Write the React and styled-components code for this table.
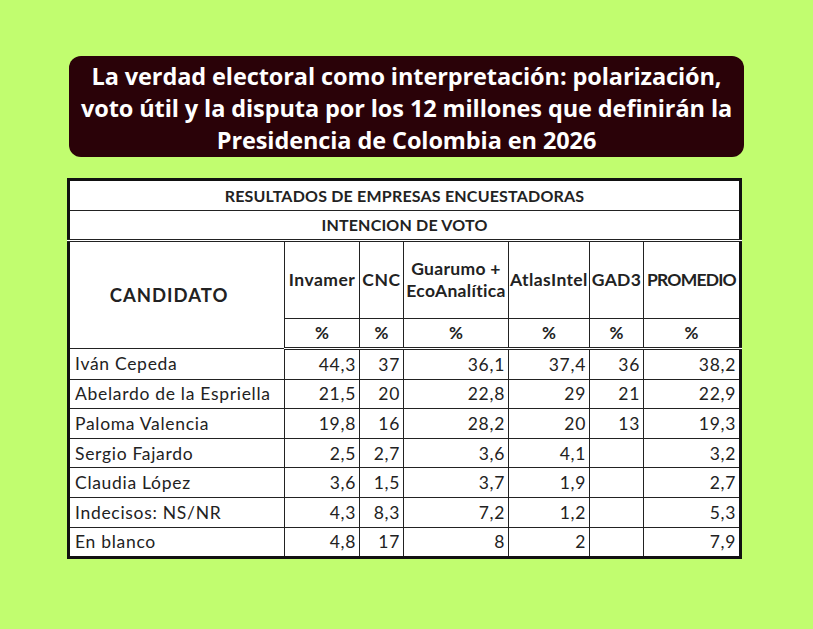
import styled, { createGlobalStyle } from "styled-components";

const GlobalStyle = createGlobalStyle`
  html, body {
    margin: 0;
    padding: 0;
    background: #c1fd6f;
  }
`;

// letter spacing per header to mimic the narrow spreadsheet font
const companies = [
  { name: "Invamer", ls: 0.5 },
  { name: "CNC", ls: 0.6 },
  { name: "Guarumo +\nEcoAnalítica", ls: 0.3 },
  { name: "AtlasIntel", ls: 0.4 },
  { name: "GAD3", ls: 0.3 },
  { name: "PROMEDIO", ls: -0.8 },
];
const widths = [216, 75, 44, 105, 81, 54, 97];

const rows = [
  ["Iván Cepeda", "44,3", "37", "36,1", "37,4", "36", "38,2"],
  ["Abelardo de la Espriella", "21,5", "20", "22,8", "29", "21", "22,9"],
  ["Paloma Valencia", "19,8", "16", "28,2", "20", "13", "19,3"],
  ["Sergio Fajardo", "2,5", "2,7", "3,6", "4,1", "", "3,2"],
  ["Claudia López", "3,6", "1,5", "3,7", "1,9", "", "2,7"],
  ["Indecisos: NS/NR", "4,3", "8,3", "7,2", "1,2", "", "5,3"],
  ["En blanco", "4,8", "17", "8", "2", "", "7,9"],
];

export default function App() {
  return (
    <>
      <GlobalStyle />
      <Page>
        <Title>
          La verdad electoral como interpretación: polarización,
          <br />
          voto útil y la disputa por los 12 millones que definirán la
          <br />
          Presidencia de Colombia en 2026
        </Title>
        <Table>
          <colgroup>
            {widths.map((w, i) => (
              <col key={i} style={{ width: w }} />
            ))}
          </colgroup>
          <tbody>
            <tr>
              <Head colSpan={7} $h={31} $size={16} $ls={0.2}>RESULTADOS DE EMPRESAS ENCUESTADORAS</Head>
            </tr>
            <tr>
              <Head colSpan={7} $h={30} $size={16} $ls={0.2} $thick>INTENCION DE VOTO</Head>
            </tr>
            <tr>
              <Head rowSpan={2} $h={78} $size={18.5} $ls={1} $shift={16}>CANDIDATO</Head>
              {companies.map((c) => (
                <Head key={c.name} $h={78} $size={17.5} $ls={c.ls}>{c.name}</Head>
              ))}
            </tr>
            <tr>
              {companies.map((c) => (
                <Head key={c.name} $h={30} $size={17} $ls={0} $thick>%</Head>
              ))}
            </tr>
            {rows.map((r) => (
              <tr key={r[0]}>
                <Name>{r[0]}</Name>
                {r.slice(1).map((v, i) => (
                  <Num key={i}>{v}</Num>
                ))}
              </tr>
            ))}
          </tbody>
        </Table>
      </Page>
    </>
  );
}

const Page = styled.div`
  display: flex;
  flex-direction: column;
  align-items: flex-start;
  padding: 56px 0 0 67px;
  min-height: 629px;
  box-sizing: border-box;
`;

const Title = styled.div`
  margin-left: 2px;
  width: 675px;
  height: 101px;
  box-sizing: border-box;
  padding: 4px 0 0;
  border-radius: 12px;
  background: #2a0208;
  color: #ffffff;
  font-family: "Open Sans", sans-serif;
  font-weight: 700;
  font-size: 23.5px;
  letter-spacing: -0.1px;
  line-height: 32px;
  text-align: center;
  white-space: nowrap;
`;

const Table = styled.table`
  margin-top: 21px;
  width: 673px;
  table-layout: fixed;
  border-collapse: collapse;
  background: #ffffff;
  border: 3px solid #111;
  font-family: Lato, "Liberation Sans", sans-serif;
  color: #222;
`;

const Head = styled.td`
  height: ${(p) => p.$h - 2}px;
  padding: 0 ${(p) => 1 + (p.$shift || 0)}px 0 1px;
  border: 1.5px solid #222;
  border-bottom: ${(p) => (p.$thick ? "3px double #222" : "1.5px solid #222")};
  font-size: ${(p) => p.$size}px;
  font-weight: 700;
  text-align: center;
  white-space: pre-line;
  line-height: 22px;
  letter-spacing: ${(p) => p.$ls}px;
`;

const Name = styled.td`
  height: 28.6px;
  padding: 0 4px 0 5px;
  border: 1.5px solid #222;
  font-size: 17.5px;
  letter-spacing: 0.7px;
  white-space: nowrap;
`;

const Num = styled.td`
  height: 28.6px;
  padding: 0 3px 0 0;
  border: 1.5px solid #222;
  font-size: 17.5px;
  letter-spacing: 0.7px;
  text-align: right;
`;
